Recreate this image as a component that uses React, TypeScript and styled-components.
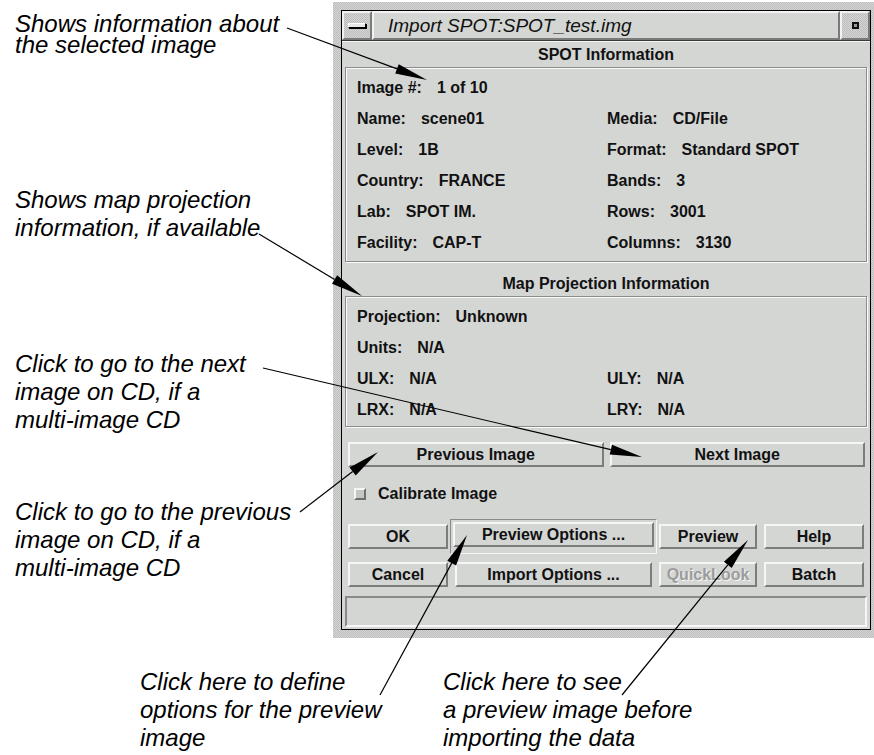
import styled, { createGlobalStyle } from "styled-components";

const GlobalStyle = createGlobalStyle`
  html, body {
    margin: 0;
    padding: 0;
    background: #fff;
  }
  body {
    font-family: "Liberation Sans", Arial, sans-serif;
  }
`;

const Page = styled.div`
  position: relative;
  width: 874px;
  height: 755px;
  overflow: hidden;
  background: #fff;
  display: grid;
  grid-template-columns: 333px 541px;
  grid-template-rows: auto 1fr;
`;

const Notes = styled.div`
  display: flex;
  flex-direction: column;
  padding-left: 15px;
`;

const Note = styled.div<{ $top: number; $lh?: number }>`
  margin-top: ${({ $top }) => $top}px;
  font: italic 24px/${({ $lh }) => $lh ?? 28}px "Liberation Sans", Arial, sans-serif;
  color: #000;
  white-space: nowrap;
`;

const BottomNotes = styled.div`
  grid-column: 1 / span 2;
  display: flex;
  padding-left: 140px;
`;

const BottomNote = styled(Note)<{ $width?: number }>`
  width: ${({ $width }) => ($width ? `${$width}px` : "auto")};
`;

/* ---------- window ---------- */

const stipple = `
  background-color: #c9c9c9;
  background-image: repeating-conic-gradient(#bdbdbd 0 25%, #d5d5d5 0 50%);
  background-size: 2px 2px;
`;

const Frame = styled.div`
  margin-top: 2px;
  padding: 8px 3px 8px 8px;
  ${stipple}
`;

const Shell = styled.div`
  border: 1px solid #000;
  background: #d4d6d4;
  display: flex;
  flex-direction: column;
`;

const TitleBar = styled.div`
  display: flex;
  height: 29px;
  border-bottom: 1px solid #3a3a3a;
`;

const TitleButton = styled.div`
  width: 26px;
  display: flex;
  align-items: center;
  justify-content: center;
  border: 2px solid;
  border-color: #f2f2f2 #7a7a7a #7a7a7a #f2f2f2;
  ${stipple}
`;

const MenuBar = styled.span`
  width: 16px;
  height: 3px;
  background: #e8e8e8;
  border: 1px solid #000;
  border-top-color: #fff;
  border-left-color: #fff;
  box-shadow: 1px 1px 0 #000;
`;

const TinySquare = styled.span`
  width: 3px;
  height: 3px;
  border: 2px solid #111;
  background: #9a9a9a;
`;

const TitleText = styled.div`
  flex: 1;
  display: flex;
  align-items: center;
  padding-left: 14px;
  border: 2px solid;
  border-color: #f2f2f2 #7a7a7a #7a7a7a #f2f2f2;
  background: #d4d6d4;
  font: italic 19px "Liberation Sans", Arial, sans-serif;
  color: #111;
`;

const Content = styled.div`
  display: flex;
  flex-direction: column;
  padding: 0 3px 2px 3px;
  border-top: 1px solid #f4f4f4;
`;

const Header = styled.div<{ $mt?: number }>`
  margin-top: ${({ $mt }) => $mt ?? 0}px;
  height: 25px;
  text-align: center;
  font: bold 16px/25px "Liberation Sans", Arial, sans-serif;
  color: #111;
`;

const Panel = styled.div<{ $pb: number }>`
  display: grid;
  grid-template-columns: 250px 1fr;
  grid-auto-rows: 31px;
  align-items: center;
  padding: 4px 12px ${({ $pb }) => $pb}px 11px;
  border: 1px solid #8c8c8c;
  box-shadow: inset 1px 1px 0 #fafafa, 1px 1px 0 #fafafa;
`;

const Field = styled.div`
  display: flex;
  gap: 15px;
  font: bold 16px "Liberation Sans", Arial, sans-serif;
  color: #111;
  white-space: nowrap;
`;

const NavRow = styled.div`
  display: grid;
  grid-template-columns: 1fr 1fr;
  gap: 6px;
  margin-top: 15px;
  padding: 0 2px 0 3px;
`;

const Button = styled.button<{ $disabled?: boolean }>`
  height: 25px;
  padding: 0;
  margin: 0;
  background: #d4d6d4;
  border: 2px solid;
  border-color: #f6f6f6 #7c7c7c #7c7c7c #f6f6f6;
  font: bold 16px "Liberation Sans", Arial, sans-serif;
  color: ${({ $disabled }) => ($disabled ? "#9c9c9c" : "#111")};
  text-shadow: ${({ $disabled }) => ($disabled ? "1px 1px 0 #f4f4f4" : "none")};
  cursor: default;
`;

const DefaultRing = styled.div`
  margin: -5px;
  padding: 2px;
  border: 1px solid;
  border-color: #8a8a8a #f6f6f6 #f6f6f6 #8a8a8a;
  display: flex;
  flex-direction: column;
`;

const ToggleRow = styled.label`
  display: flex;
  align-items: center;
  gap: 12px;
  height: 28px;
  margin-top: 13px;
  padding-left: 9px;
  font: bold 16px "Liberation Sans", Arial, sans-serif;
  color: #111;
`;

const Toggle = styled.span`
  width: 8px;
  height: 8px;
  border: 2px solid;
  border-color: #f6f6f6 #6e6e6e #6e6e6e #f6f6f6;
  background: #c4c6c4;
`;

const ActionGrid = styled.div`
  display: grid;
  grid-template-columns: 100px 197px 98px 100px;
  grid-auto-rows: 25px;
  column-gap: 7px;
  row-gap: 13px;
  margin-top: 16px;
  padding-left: 3px;
`;

const StatusBar = styled.div`
  height: 27px;
  margin-top: 9px;
  border: 2px solid;
  border-color: #8a8a8a #f6f6f6 #f6f6f6 #8a8a8a;
`;

const Overlay = styled.svg`
  position: absolute;
  left: 0;
  top: 0;
  pointer-events: none;
`;

type Pair = [string, string] | null;

const spotRows: [Pair, Pair][] = [
  [["Image #:", "1 of 10"], null],
  [["Name:", "scene01"], ["Media:", "CD/File"]],
  [["Level:", "1B"], ["Format:", "Standard SPOT"]],
  [["Country:", "FRANCE"], ["Bands:", "3"]],
  [["Lab:", "SPOT IM."], ["Rows:", "3001"]],
  [["Facility:", "CAP-T"], ["Columns:", "3130"]],
];

const mapRows: [Pair, Pair][] = [
  [["Projection:", "Unknown"], null],
  [["Units:", "N/A"], null],
  [["ULX:", "N/A"], ["ULY:", "N/A"]],
  [["LRX:", "N/A"], ["LRY:", "N/A"]],
];

const arrows: [number, number, number, number][] = [
  [287, 28, 427, 80],
  [259, 234, 362, 296],
  [263, 368, 642, 457],
  [300, 512, 378, 452],
  [380, 695, 467, 535],
  [622, 695, 748, 540],
];

function Rows({ rows }: { rows: [Pair, Pair][] }) {
  return (
    <>
      {rows.map(([l, r], i) => [
        <Field key={`l${i}`}>
          {l && (
            <>
              <span>{l[0]}</span>
              <span>{l[1]}</span>
            </>
          )}
        </Field>,
        <Field key={`r${i}`}>
          {r && (
            <>
              <span>{r[0]}</span>
              <span>{r[1]}</span>
            </>
          )}
        </Field>,
      ])}
    </>
  );
}

function Arrow({ x1, y1, x2, y2 }: { x1: number; y1: number; x2: number; y2: number }) {
  const len = Math.hypot(x2 - x1, y2 - y1);
  const ux = (x2 - x1) / len;
  const uy = (y2 - y1) / len;
  const head = 32;
  const half = 5;
  const bx = x2 - ux * head;
  const by = y2 - uy * head;
  const pts = `${x2},${y2} ${bx - uy * half},${by + ux * half} ${bx + uy * half},${by - ux * half}`;
  return (
    <g>
      <line x1={x1} y1={y1} x2={bx} y2={by} stroke="#000" strokeWidth={1.2} />
      <polygon points={pts} fill="#000" />
    </g>
  );
}

export default function App() {
  return (
    <>
      <GlobalStyle />
      <Page>
        <Notes>
          <Note $top={13} $lh={21}>
            Shows information about
            <br />
            the selected image
          </Note>
          <Note $top={131}>
            Shows map projection
            <br />
            information, if available
          </Note>
          <Note $top={108}>
            Click to go to the next
            <br />
            image on CD, if a
            <br />
            multi-image CD
          </Note>
          <Note $top={64}>
            Click to go to the previous
            <br />
            image on CD, if a
            <br />
            multi-image CD
          </Note>
        </Notes>

        <Frame>
          <Shell>
            <TitleBar>
              <TitleButton>
                <MenuBar />
              </TitleButton>
              <TitleText>Import SPOT:SPOT_test.img</TitleText>
              <TitleButton>
                <TinySquare />
              </TitleButton>
            </TitleBar>
            <Content>
              <Header>SPOT Information</Header>
              <Panel $pb={3}>
                <Rows rows={spotRows} />
              </Panel>
              <Header $mt={9}>Map Projection Information</Header>
              <Panel $pb={1}>
                <Rows rows={mapRows} />
              </Panel>
              <NavRow>
                <Button>Previous Image</Button>
                <Button>Next Image</Button>
              </NavRow>
              <ToggleRow>
                <Toggle />
                Calibrate Image
              </ToggleRow>
              <ActionGrid>
                <Button>OK</Button>
                <DefaultRing>
                  <Button>Preview Options ...</Button>
                </DefaultRing>
                <Button>Preview</Button>
                <Button>Help</Button>
                <Button>Cancel</Button>
                <Button>Import Options ...</Button>
                <Button $disabled>QuickLook</Button>
                <Button>Batch</Button>
              </ActionGrid>
              <StatusBar />
            </Content>
          </Shell>
        </Frame>

        <BottomNotes>
          <BottomNote $top={30} $width={303}>
            Click here to define
            <br />
            options for the preview
            <br />
            image
          </BottomNote>
          <BottomNote $top={30}>
            Click here to see
            <br />
            a preview image before
            <br />
            importing the data
          </BottomNote>
        </BottomNotes>

        <Overlay width={874} height={755} viewBox="0 0 874 755">
          {arrows.map(([x1, y1, x2, y2], i) => (
            <Arrow key={i} x1={x1} y1={y1} x2={x2} y2={y2} />
          ))}
        </Overlay>
      </Page>
    </>
  );
}
